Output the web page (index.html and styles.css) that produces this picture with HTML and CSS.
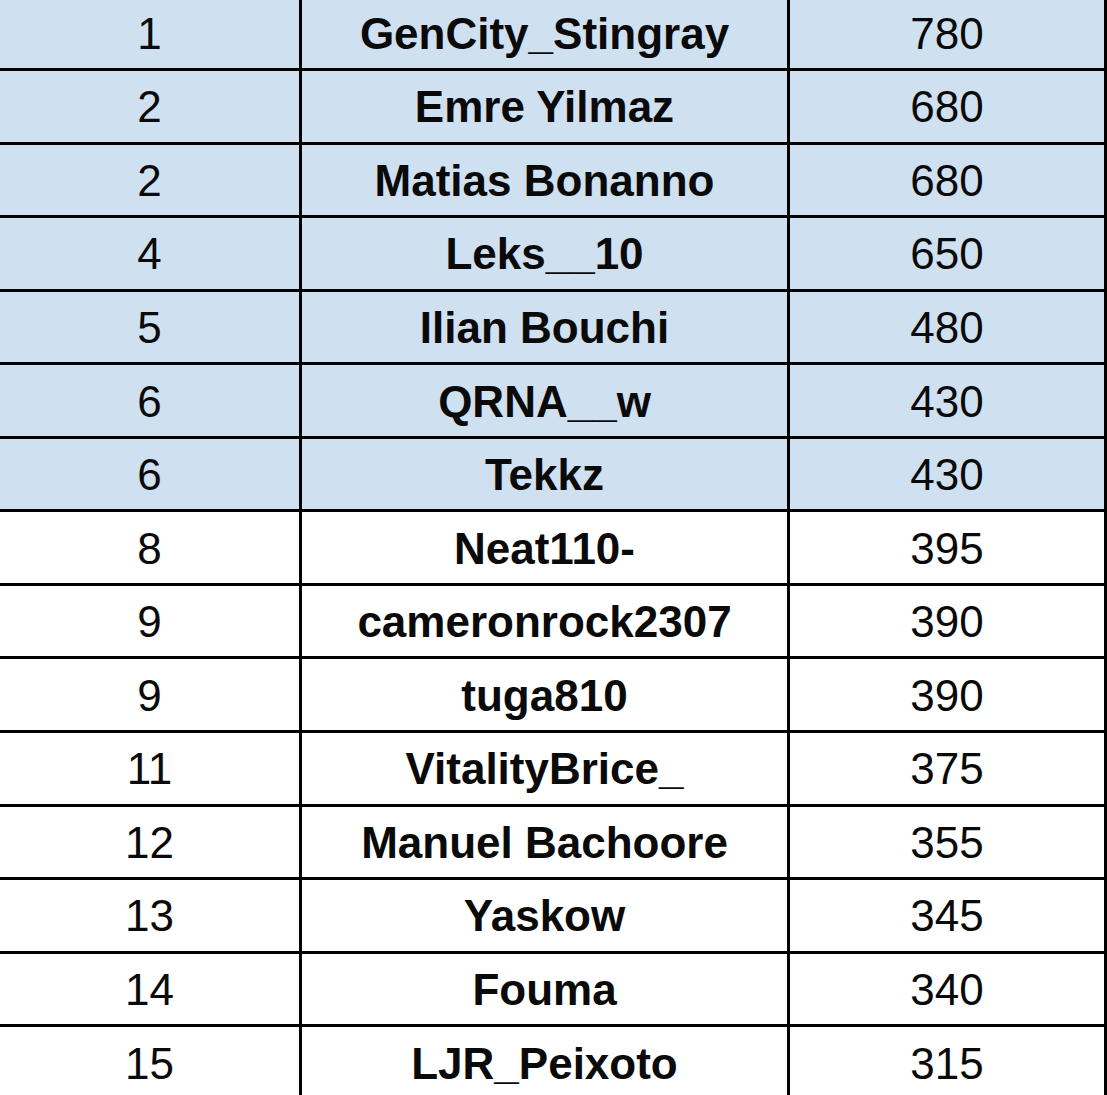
FILE: index.html
```html
<!DOCTYPE html>
<html lang="en">
<head>
<meta charset="utf-8">
<title>Standings</title>
<link rel="stylesheet" href="styles.css">
</head>
<body>
<div class="board">
  <div class="cell hl">1</div><div class="cell hl name">GenCity_Stingray</div><div class="cell hl">780</div>
  <div class="cell hl">2</div><div class="cell hl name">Emre Yilmaz</div><div class="cell hl">680</div>
  <div class="cell hl">2</div><div class="cell hl name">Matias Bonanno</div><div class="cell hl">680</div>
  <div class="cell hl">4</div><div class="cell hl name">Leks__10</div><div class="cell hl">650</div>
  <div class="cell hl">5</div><div class="cell hl name">Ilian Bouchi</div><div class="cell hl">480</div>
  <div class="cell hl">6</div><div class="cell hl name">QRNA__w</div><div class="cell hl">430</div>
  <div class="cell hl">6</div><div class="cell hl name">Tekkz</div><div class="cell hl">430</div>
  <div class="cell">8</div><div class="cell name">Neat110-</div><div class="cell">395</div>
  <div class="cell">9</div><div class="cell name">cameronrock2307</div><div class="cell">390</div>
  <div class="cell">9</div><div class="cell name">tuga810</div><div class="cell">390</div>
  <div class="cell">11</div><div class="cell name">VitalityBrice_</div><div class="cell">375</div>
  <div class="cell">12</div><div class="cell name">Manuel Bachoore</div><div class="cell">355</div>
  <div class="cell">13</div><div class="cell name">Yaskow</div><div class="cell">345</div>
  <div class="cell">14</div><div class="cell name">Fouma</div><div class="cell">340</div>
  <div class="cell">15</div><div class="cell name">LJR_Peixoto</div><div class="cell">315</div>
</div>
</body>
</html>
```
FILE: styles.css
```css
html, body {
  margin: 0;
  padding: 0;
  background: #ffffff;
  overflow: hidden;
}
.board {
  display: grid;
  grid-template-columns: 299px 485px 314px;
  grid-auto-rows: 70.57px;
  gap: 3px;
  padding: 3px;
  background: #000000;
  width: max-content;
  margin: -5.6px 0 0 -3px;
  font-family: "Liberation Sans", Arial, sans-serif;
  font-size: 44px;
  color: #0a0a0a;
}
.cell {
  background: #ffffff;
  display: flex;
  align-items: center;
  justify-content: center;
  line-height: 1;
  padding-top: 2px;
}
.cell.hl {
  background: #cfe0f1;
}
.name {
  font-weight: bold;
}
```
